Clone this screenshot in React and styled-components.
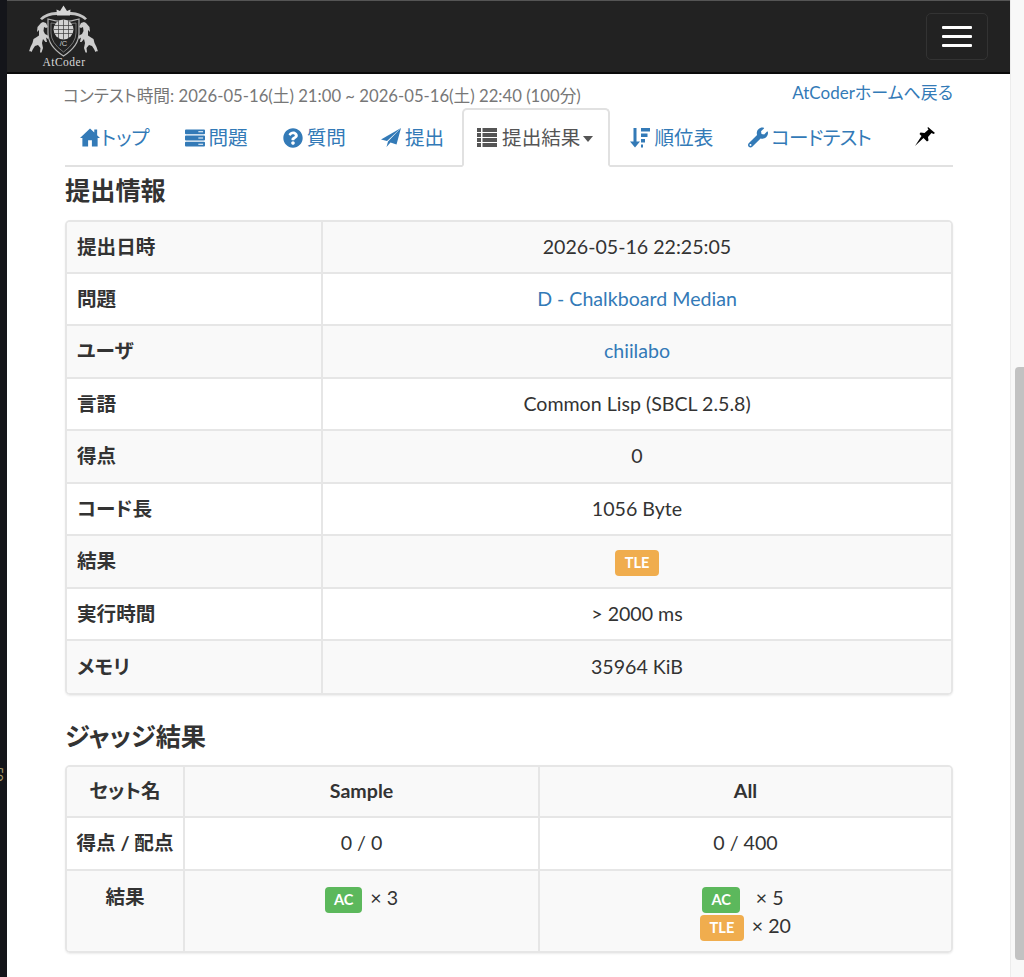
import React from "react";
import styled, { createGlobalStyle } from "styled-components";
import { FaQuestionCircle, FaWrench } from "react-icons/fa";

const GlobalStyle = createGlobalStyle`
  html, body { margin: 0; padding: 0; background: #fff; }
  body {
    font-family: Lato, "Noto Sans CJK JP", sans-serif;
    font-size: 19.6px;
    line-height: 28px;
    font-feature-settings: "palt";
    color: #333;
    overflow: hidden;
  }
`;

const Frame = styled.div`
  display: flex;
  width: 1024px;
  height: 977px;
  overflow: hidden;
`;

const DesktopEdge = styled.div`
  position: relative;
  flex: 0 0 7px;
  overflow: hidden;
  background: #14151a;
`;

const EdgeText = styled.span`
  position: absolute;
  left: -10px;
  top: 767px;
  font-size: 13px;
  line-height: 14px;
  color: #a99a6a;
  transform: rotate(90deg);
`;

const Page = styled.div`
  flex: 1;
  min-width: 0;
`;

const ScrollTrack = styled.div`
  flex: 0 0 14px;
  padding-top: 367px;
  background: #f8f8f8;
  border-left: 1px solid #ececec;
  box-sizing: border-box;
`;

const ScrollThumb = styled.div`
  width: 9px;
  height: 593px;
  margin-left: 4px;
  background: #c2c2c2;
  border-radius: 4px 0 0 4px;
`;

const Navbar = styled.header`
  display: flex;
  align-items: flex-start;
  justify-content: space-between;
  height: 74px;
  box-sizing: border-box;
  padding: 4px 22px 0 21px;
  background: #222;
  border-top: 1px solid #555;
  border-bottom: 2px solid #0a0a0a;
`;

const Burger = styled.div`
  display: flex;
  flex-direction: column;
  justify-content: center;
  gap: 6px;
  width: 62px;
  height: 47px;
  margin-top: 8px;
  box-sizing: border-box;
  padding: 0 15px;
  border: 1px solid #333;
  border-radius: 5px;
`;

const BurgerBar = styled.span`
  display: block;
  height: 3px;
  background: #fff;
  border-radius: 1px;
`;

const Container = styled.main`
  width: 888px;
  margin-left: 58px;
`;

const ContestRow = styled.div`
  display: flex;
  justify-content: space-between;
  height: 34px;
`;

const ContestTime = styled.span`
  font-size: 16.7px;
  line-height: 24px;
  margin-top: 10px;
  margin-left: -2px;
  color: #777;
`;

const HomeLink = styled.a`
  font-size: 17px;
  line-height: 24px;
  margin-top: 7px;
  color: #337ab7;
`;

const Tabs = styled.nav`
  display: flex;
  gap: 5px;
  height: 59px;
  box-sizing: border-box;
  border-bottom: 2px solid #e1e1e1;
  white-space: nowrap;
`;

const Tab = styled.a`
  display: flex;
  flex: none;
  align-items: center;
  height: 59px;
  box-sizing: border-box;
  padding: ${(p) => (p.$active ? "0 15px 0 13px" : "0 13px")};
  margin-left: ${(p) => (p.$active ? "-2px" : "0")};
  letter-spacing: ${(p) => (p.$tight ? "-0.7px" : "normal")};
  color: ${(p) => (p.$active ? "#555" : "#337ab7")};
  background: ${(p) => (p.$active ? "#fff" : "transparent")};
  border: ${(p) => (p.$active ? "2px solid #e1e1e1" : "2px solid transparent")};
  border-bottom-color: ${(p) => (p.$active ? "#fff" : "transparent")};
  border-radius: 5px 5px 0 0;
`;

const PinTab = styled.a`
  display: flex;
  align-items: center;
  height: 57px;
  margin-left: auto;
  padding-right: 18px;
  color: #000;
`;

const TabIcon = styled.span`
  display: flex;
  flex: none;
  justify-content: center;
  width: 20px;
  margin-right: ${(p) => p.$gap ?? 4}px;
  font-size: 20px;
`;

const Caret = styled.span`
  flex: none;
  width: 0;
  height: 0;
  margin-left: 3px;
  margin-top: 3px;
  border-top: 6px solid #555;
  border-left: 5.5px solid transparent;
  border-right: 5.5px solid transparent;
`;

const Heading = styled.h3`
  margin: 0;
  padding: ${(p) => p.$pad};
  font-size: 25.2px;
  line-height: 30px;
  font-weight: 700;
  color: #333;
`;

const Panel = styled.div`
  border: 2px solid #e6e6e6;
  border-radius: 5px;
  overflow: hidden;
  box-shadow: 0 1px 2px rgba(0, 0, 0, 0.08);
`;

const Table = styled.table`
  width: 100%;
  table-layout: fixed;
  border-collapse: collapse;
`;

const Row = styled.tr`
  background: ${(p) => (p.$striped ? "#f9f9f9" : "#fff")};
  border-top: 2px solid #e6e6e6;
  &:first-child { border-top: 0; }
  &:first-child > * { height: 50.5px; }
`;

const Label = styled.th`
  height: ${(p) => p.$height ?? 52.5}px;
  box-sizing: border-box;
  padding: ${(p) => (p.$top ? "12px" : "0")} ${(p) => (p.$center ? "0" : "10px")} 0;
  text-align: ${(p) => (p.$center ? "center" : "left")};
  vertical-align: ${(p) => (p.$top ? "top" : "middle")};
  font-weight: 700;
  white-space: nowrap;
  border-right: 2px solid #e6e6e6;
`;

const Cell = styled.td`
  height: ${(p) => p.$height ?? 52.5}px;
  box-sizing: border-box;
  padding: ${(p) => (p.$top ? "13px 11px 0" : "0 11px")};
  text-align: center;
  vertical-align: ${(p) => (p.$top ? "top" : "middle")};
  font-weight: ${(p) => (p.$bold ? 700 : 400)};
  border-left: ${(p) => (p.$divided ? "2px solid #e6e6e6" : "0")};
`;

const Link = styled.a`
  color: #337ab7;
`;

const ResultLine = styled.div`
  height: 28px;
`;

const Badge = styled.span`
  display: inline-block;
  height: 26px;
  box-sizing: border-box;
  padding: 0 ${(p) => (p.$kind === "AC" ? 9 : 9.5)}px;
  vertical-align: middle;
  font-size: 14.6px;
  line-height: 26px;
  font-weight: 700;
  color: #fff;
  background: ${(p) => (p.$kind === "AC" ? "#5cb85c" : "#f0ad4e")};
  border-radius: 4px;
`;

const Count = styled.span`
  margin-left: ${(p) => p.$gap ?? 8}px;
  margin-right: ${(p) => p.$after ?? 0}px;
`;

const HomeIcon = () => (
  <svg width="21" height="19" viewBox="0 0 21 19" fill="currentColor">
    <path d="M10.500 0 L15 4.300 V1 H18 V7.200 L21 10 H18.500 V19 H12.500 V12.500 H8.500 V19 H2.500 V10 H0 Z" />
  </svg>
);

const TasksIcon = () => (
  <svg width="21" height="18" viewBox="0 0 21 18" fill="currentColor" fillRule="evenodd">
    <path d="M1 0h19a1 1 0 0 1 1 1v3a1 1 0 0 1-1 1H1a1 1 0 0 1-1-1V1a1 1 0 0 1 1-1zm13 2v1h5V2z" />
    <path d="M1 6.500h19a1 1 0 0 1 1 1v3a1 1 0 0 1-1 1H1a1 1 0 0 1-1-1v-3a1 1 0 0 1 1-1zm13 2v1h5v-1z" />
    <path d="M1 13h19a1 1 0 0 1 1 1v3a1 1 0 0 1-1 1H1a1 1 0 0 1-1-1v-3a1 1 0 0 1 1-1zm13 2v1h5v-1z" />
  </svg>
);

const SendIcon = () => (
  <svg width="20" height="19" viewBox="0 0 20 19" fill="currentColor">
    <path d="M20 0 L0 11.500 L6 13 Z" />
    <path d="M20 0 L7 13.500 L5.500 19 L9.500 14.500 L15.500 16.500 Z" />
  </svg>
);

const ListIcon = () => (
  <svg width="20" height="19" viewBox="0 0 20 19" fill="currentColor">
    <path d="M0 0h4v4H0zM5.500 0H20v4H5.500zM0 5h4v4H0zM5.500 5H20v4H5.500zM0 10h4v4H0zM5.500 10H20v4H5.500zM0 15h4v4H0zM5.500 15H20v4H5.500z" />
  </svg>
);

const SortIcon = () => (
  <svg width="20" height="20" viewBox="0 0 20 20" fill="currentColor">
    <path d="M3.500 0h3v13.500H10L5 19.500 0 13.500h3.500z" />
    <rect x="11" y="0" width="9" height="3.500" />
    <rect x="11" y="5.500" width="6.500" height="3.500" />
    <rect x="11" y="11" width="4" height="3.500" />
    <rect x="11" y="16.500" width="2" height="3" />
  </svg>
);

const PinIcon = () => (
  <svg width="20" height="19" viewBox="0 0 20 19" fill="currentColor">
    <path d="M13 0 L20 6 L18.500 7 L16.500 6 L13 10 L13.500 13.500 L12 14.500 L8.500 11 L0 19 L6.500 9 L4.500 7 L5.500 5.500 L9.500 6 L13.500 2.500 L12.500 1 Z" />
  </svg>
);

const Horse = ({ flip }) => (
  <g transform={flip ? "translate(71 0) scale(-1 1)" : undefined} fill="#cdcdcd">
    <path d="M13 18 L15 17 L18 18 L20 22 L18 23 L16 22 L15.500 26 L17 29 L21 31 L20 34 L18 32.500 L19 37 L17.500 37 L15 34 L14 38 L15 43 L13.500 47.500 L12 47.500 L12.500 43 L10 40 L7 41 L5 44 L3.500 47 L2 46 L1 46.500 L2.500 42 L4.500 38 L5.500 34 L8 32.500 L11 30.500 L11 25 L9 27 L9.500 22 Z" />
  </g>
);

const Logo = () => (
  <svg width="72" height="62" viewBox="0 0 72 62" aria-label="AtCoder">
    <Horse />
    <Horse flip />
    <path d="M20 14 Q35.500 19 51 14 V28 Q51 41 35.500 51 Q20 41 20 28 Z" fill="#222" stroke="#b5b5b5" strokeWidth="1.200" />
    <path d="M23 18 Q35.500 21 48 18 V28 Q48 38 35.500 47 Q23 38 23 28 Z" fill="none" stroke="#888" strokeWidth="0.800" />
    <circle cx="35.500" cy="24.500" r="10" fill="#d4d4d4" />
    <path d="M25.500 20.500h20M25.500 24.500h20M25.500 28.500h20M35.500 14.500v20M30.500 15.500v18M40.500 15.500v18" stroke="#3a3a3a" strokeWidth="0.700" fill="none" />
    <path d="M12 13.500 Q19 6.500 29 7 L29 10 Q20 10 14 15 Z" fill="#c4c4c4" />
    <path d="M59 13.500 Q52 6.500 42 7 L42 10 Q51 10 57 15 Z" fill="#c4c4c4" />
    <path d="M29 10.500 L28.500 4.500 L32 6 L35.500 0.500 L39 6 L42.500 4.500 L42 10.500 Z" fill="#d6d6d6" />
    <text x="35.500" y="41" fontSize="7.500" fill="#cfcfcf" textAnchor="middle" fontFamily="Liberation Sans, sans-serif">/C</text>
    <text x="36" y="61" fontSize="11.500" letterSpacing="0.500" fill="#d8d8d8" textAnchor="middle" fontFamily="Liberation Serif, serif">AtCoder</text>
  </svg>
);

const infoRows = [
  ["提出日時", "2026-05-16 22:25:05"],
  ["問題", <Link>D - Chalkboard Median</Link>],
  ["ユーザ", <Link>chiilabo</Link>],
  ["言語", "Common Lisp (SBCL 2.5.8)"],
  ["得点", "0"],
  ["コード長", "1056 Byte"],
  ["結果", <Badge $kind="TLE">TLE</Badge>],
  ["実行時間", "> 2000 ms"],
  ["メモリ", "35964 KiB"],
];

export default function App() {
  return (
    <Frame>
      <GlobalStyle />
      <DesktopEdge>
        <EdgeText>50</EdgeText>
      </DesktopEdge>
      <Page>
        <Navbar>
          <Logo />
          <Burger>
            <BurgerBar />
            <BurgerBar />
            <BurgerBar />
          </Burger>
        </Navbar>
        <Container>
          <ContestRow>
            <ContestTime>コンテスト時間: 2026-05-16(土) 21:00 ~ 2026-05-16(土) 22:40 (100分)</ContestTime>
            <HomeLink>AtCoderホームへ戻る</HomeLink>
          </ContestRow>
          <Tabs>
            <Tab><TabIcon $gap={1}><HomeIcon /></TabIcon>トップ</Tab>
            <Tab><TabIcon><TasksIcon /></TabIcon>問題</Tab>
            <Tab><TabIcon><FaQuestionCircle /></TabIcon>質問</Tab>
            <Tab><TabIcon><SendIcon /></TabIcon>提出</Tab>
            <Tab $active><TabIcon $gap={5}><ListIcon /></TabIcon>提出結果<Caret /></Tab>
            <Tab><TabIcon><SortIcon /></TabIcon>順位表</Tab>
            <Tab $tight><TabIcon $gap={3}><FaWrench size={21} /></TabIcon>コードテスト</Tab>
            <PinTab><PinIcon /></PinTab>
          </Tabs>
          <Heading $pad="8px 0 15px">提出情報</Heading>
          <Panel>
            <Table>
              <colgroup>
                <col style={{ width: 255 }} />
                <col />
              </colgroup>
              <tbody>
                {infoRows.map(([label, value], i) => (
                  <Row key={label} $striped={i % 2 === 0}>
                    <Label>{label}</Label>
                    <Cell>{value}</Cell>
                  </Row>
                ))}
              </tbody>
            </Table>
          </Panel>
          <Heading $pad="26px 0 14px">ジャッジ結果</Heading>
          <Panel>
            <Table>
              <colgroup>
                <col style={{ width: 117 }} />
                <col style={{ width: 355 }} />
                <col />
              </colgroup>
              <tbody>
                <Row $striped>
                  <Label $center>セット名</Label>
                  <Cell $bold>Sample</Cell>
                  <Cell $bold $divided>All</Cell>
                </Row>
                <Row>
                  <Label $center>得点 / 配点</Label>
                  <Cell>0 / 0</Cell>
                  <Cell $divided>0 / 400</Cell>
                </Row>
                <Row $striped>
                  <Label $center $top $height={81}>結果</Label>
                  <Cell $top $height={81}>
                    <ResultLine><Badge $kind="AC">AC</Badge><Count>× 3</Count></ResultLine>
                  </Cell>
                  <Cell $top $divided $height={81}>
                    <ResultLine><Badge $kind="AC">AC</Badge><Count $gap={16} $after={5}>× 5</Count></ResultLine>
                    <ResultLine><Badge $kind="TLE">TLE</Badge><Count>× 20</Count></ResultLine>
                  </Cell>
                </Row>
              </tbody>
            </Table>
          </Panel>
        </Container>
      </Page>
      <ScrollTrack>
        <ScrollThumb />
      </ScrollTrack>
    </Frame>
  );
}
